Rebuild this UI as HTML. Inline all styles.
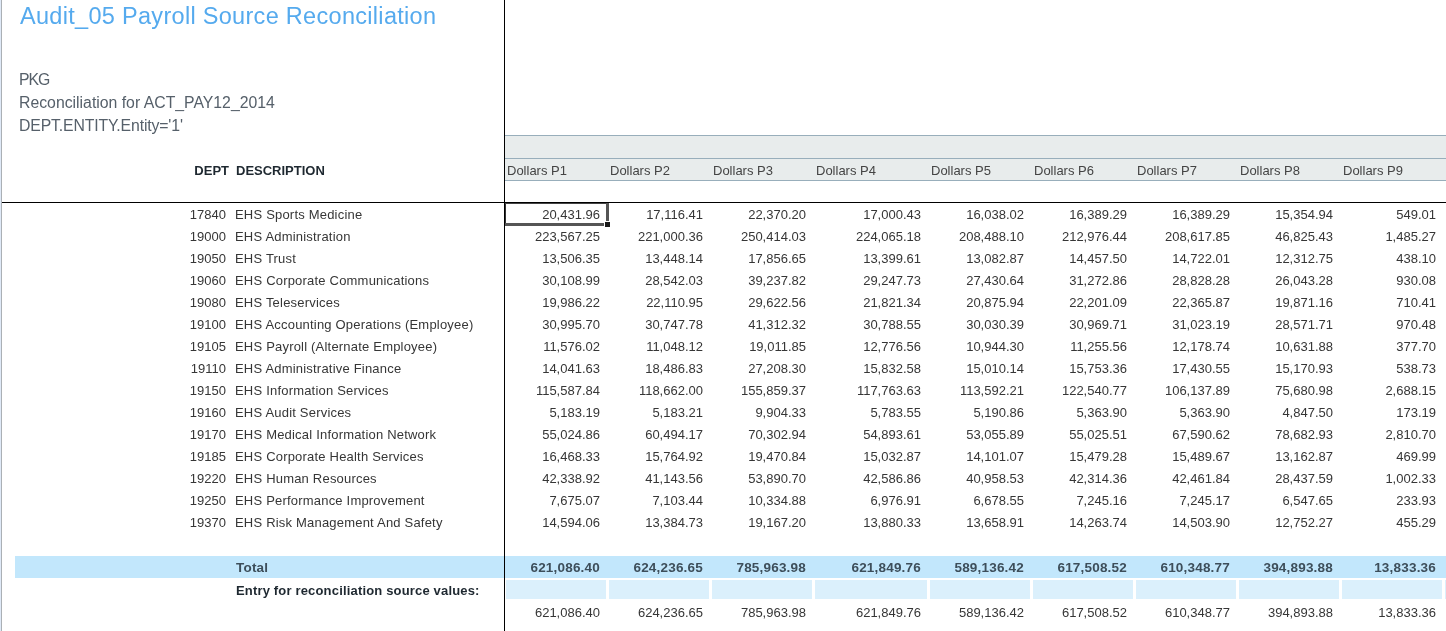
<!DOCTYPE html><html><head><meta charset="utf-8"><style>
*{margin:0;padding:0;box-sizing:border-box}
html,body{-webkit-font-smoothing:antialiased;width:1446px;height:631px;overflow:hidden;background:#fff}
body{position:relative;will-change:transform;font-family:"Liberation Sans",sans-serif;font-size:13px;color:#363636}
.a{position:absolute;white-space:nowrap}
.r{text-align:right}
.t{line-height:16px}

</style></head><body>
<div class="a" style="left:0;top:0;width:1px;height:631px;background:#dfe9f7"></div>
<div class="a" style="left:1px;top:0;width:1px;height:631px;background:#abb0b5"></div>
<div class="a" style="left:20px;top:1px;font-size:23.5px;letter-spacing:0.3px;color:#55aaee;line-height:30px">Audit_05 Payroll Source Reconciliation</div>
<div class="a" style="left:19px;top:70px;font-size:15.8px;letter-spacing:-1px;color:#56606a;line-height:20px">PKG</div>
<div class="a" style="left:19px;top:93px;font-size:15.8px;letter-spacing:0px;color:#56606a;line-height:20px">Reconciliation for ACT_PAY12_2014</div>
<div class="a" style="left:19px;top:116px;font-size:15.8px;letter-spacing:-0.14px;color:#56606a;line-height:20px">DEPT.ENTITY.Entity='1'</div>
<div class="a" style="left:505px;top:135px;width:941px;height:46px;background:#e8ecec;border-top:1px solid #98aebb;border-bottom:1px solid #98aebb"></div>
<div class="a" style="left:505px;top:158px;width:941px;height:1px;background:#98aebb"></div>
<div class="a t" style="left:507px;top:163px;color:#444">Dollars P1</div>
<div class="a t" style="left:610px;top:163px;color:#444">Dollars P2</div>
<div class="a t" style="left:713px;top:163px;color:#444">Dollars P3</div>
<div class="a t" style="left:816px;top:163px;color:#444">Dollars P4</div>
<div class="a t" style="left:931px;top:163px;color:#444">Dollars P5</div>
<div class="a t" style="left:1034px;top:163px;color:#444">Dollars P6</div>
<div class="a t" style="left:1137px;top:163px;color:#444">Dollars P7</div>
<div class="a t" style="left:1240px;top:163px;color:#444">Dollars P8</div>
<div class="a t" style="left:1343px;top:163px;color:#444">Dollars P9</div>
<div class="a t" style="left:0;top:163px;width:229px;text-align:right;font-weight:bold;color:#1e2830">DEPT</div>
<div class="a t" style="left:236px;top:163px;font-weight:bold;color:#1e2830">DESCRIPTION</div>
<div class="a" style="left:504px;top:0;width:1px;height:631px;background:#000"></div>
<div class="a" style="left:2px;top:202px;width:1444px;height:1px;background:#000"></div>
<div class="a t" style="left:0;top:207px;width:226px;text-align:right">17840</div>
<div class="a t" style="left:235px;top:207px;letter-spacing:0.2px">EHS Sports Medicine</div>
<div class="a t r" style="left:505px;top:207px;width:95px">20,431.96</div>
<div class="a t r" style="left:608px;top:207px;width:95px">17,116.41</div>
<div class="a t r" style="left:711px;top:207px;width:95px">22,370.20</div>
<div class="a t r" style="left:814px;top:207px;width:107px">17,000.43</div>
<div class="a t r" style="left:929px;top:207px;width:95px">16,038.02</div>
<div class="a t r" style="left:1032px;top:207px;width:95px">16,389.29</div>
<div class="a t r" style="left:1135px;top:207px;width:95px">16,389.29</div>
<div class="a t r" style="left:1238px;top:207px;width:95px">15,354.94</div>
<div class="a t r" style="left:1341px;top:207px;width:95px">549.01</div>
<div class="a t" style="left:0;top:229px;width:226px;text-align:right">19000</div>
<div class="a t" style="left:235px;top:229px;letter-spacing:0.2px">EHS Administration</div>
<div class="a t r" style="left:505px;top:229px;width:95px">223,567.25</div>
<div class="a t r" style="left:608px;top:229px;width:95px">221,000.36</div>
<div class="a t r" style="left:711px;top:229px;width:95px">250,414.03</div>
<div class="a t r" style="left:814px;top:229px;width:107px">224,065.18</div>
<div class="a t r" style="left:929px;top:229px;width:95px">208,488.10</div>
<div class="a t r" style="left:1032px;top:229px;width:95px">212,976.44</div>
<div class="a t r" style="left:1135px;top:229px;width:95px">208,617.85</div>
<div class="a t r" style="left:1238px;top:229px;width:95px">46,825.43</div>
<div class="a t r" style="left:1341px;top:229px;width:95px">1,485.27</div>
<div class="a t" style="left:0;top:251px;width:226px;text-align:right">19050</div>
<div class="a t" style="left:235px;top:251px;letter-spacing:0.2px">EHS Trust</div>
<div class="a t r" style="left:505px;top:251px;width:95px">13,506.35</div>
<div class="a t r" style="left:608px;top:251px;width:95px">13,448.14</div>
<div class="a t r" style="left:711px;top:251px;width:95px">17,856.65</div>
<div class="a t r" style="left:814px;top:251px;width:107px">13,399.61</div>
<div class="a t r" style="left:929px;top:251px;width:95px">13,082.87</div>
<div class="a t r" style="left:1032px;top:251px;width:95px">14,457.50</div>
<div class="a t r" style="left:1135px;top:251px;width:95px">14,722.01</div>
<div class="a t r" style="left:1238px;top:251px;width:95px">12,312.75</div>
<div class="a t r" style="left:1341px;top:251px;width:95px">438.10</div>
<div class="a t" style="left:0;top:273px;width:226px;text-align:right">19060</div>
<div class="a t" style="left:235px;top:273px;letter-spacing:0.2px">EHS Corporate Communications</div>
<div class="a t r" style="left:505px;top:273px;width:95px">30,108.99</div>
<div class="a t r" style="left:608px;top:273px;width:95px">28,542.03</div>
<div class="a t r" style="left:711px;top:273px;width:95px">39,237.82</div>
<div class="a t r" style="left:814px;top:273px;width:107px">29,247.73</div>
<div class="a t r" style="left:929px;top:273px;width:95px">27,430.64</div>
<div class="a t r" style="left:1032px;top:273px;width:95px">31,272.86</div>
<div class="a t r" style="left:1135px;top:273px;width:95px">28,828.28</div>
<div class="a t r" style="left:1238px;top:273px;width:95px">26,043.28</div>
<div class="a t r" style="left:1341px;top:273px;width:95px">930.08</div>
<div class="a t" style="left:0;top:295px;width:226px;text-align:right">19080</div>
<div class="a t" style="left:235px;top:295px;letter-spacing:0.2px">EHS Teleservices</div>
<div class="a t r" style="left:505px;top:295px;width:95px">19,986.22</div>
<div class="a t r" style="left:608px;top:295px;width:95px">22,110.95</div>
<div class="a t r" style="left:711px;top:295px;width:95px">29,622.56</div>
<div class="a t r" style="left:814px;top:295px;width:107px">21,821.34</div>
<div class="a t r" style="left:929px;top:295px;width:95px">20,875.94</div>
<div class="a t r" style="left:1032px;top:295px;width:95px">22,201.09</div>
<div class="a t r" style="left:1135px;top:295px;width:95px">22,365.87</div>
<div class="a t r" style="left:1238px;top:295px;width:95px">19,871.16</div>
<div class="a t r" style="left:1341px;top:295px;width:95px">710.41</div>
<div class="a t" style="left:0;top:317px;width:226px;text-align:right">19100</div>
<div class="a t" style="left:235px;top:317px;letter-spacing:0.2px">EHS Accounting Operations (Employee)</div>
<div class="a t r" style="left:505px;top:317px;width:95px">30,995.70</div>
<div class="a t r" style="left:608px;top:317px;width:95px">30,747.78</div>
<div class="a t r" style="left:711px;top:317px;width:95px">41,312.32</div>
<div class="a t r" style="left:814px;top:317px;width:107px">30,788.55</div>
<div class="a t r" style="left:929px;top:317px;width:95px">30,030.39</div>
<div class="a t r" style="left:1032px;top:317px;width:95px">30,969.71</div>
<div class="a t r" style="left:1135px;top:317px;width:95px">31,023.19</div>
<div class="a t r" style="left:1238px;top:317px;width:95px">28,571.71</div>
<div class="a t r" style="left:1341px;top:317px;width:95px">970.48</div>
<div class="a t" style="left:0;top:339px;width:226px;text-align:right">19105</div>
<div class="a t" style="left:235px;top:339px;letter-spacing:0.2px">EHS Payroll (Alternate Employee)</div>
<div class="a t r" style="left:505px;top:339px;width:95px">11,576.02</div>
<div class="a t r" style="left:608px;top:339px;width:95px">11,048.12</div>
<div class="a t r" style="left:711px;top:339px;width:95px">19,011.85</div>
<div class="a t r" style="left:814px;top:339px;width:107px">12,776.56</div>
<div class="a t r" style="left:929px;top:339px;width:95px">10,944.30</div>
<div class="a t r" style="left:1032px;top:339px;width:95px">11,255.56</div>
<div class="a t r" style="left:1135px;top:339px;width:95px">12,178.74</div>
<div class="a t r" style="left:1238px;top:339px;width:95px">10,631.88</div>
<div class="a t r" style="left:1341px;top:339px;width:95px">377.70</div>
<div class="a t" style="left:0;top:361px;width:226px;text-align:right">19110</div>
<div class="a t" style="left:235px;top:361px;letter-spacing:0.2px">EHS Administrative Finance</div>
<div class="a t r" style="left:505px;top:361px;width:95px">14,041.63</div>
<div class="a t r" style="left:608px;top:361px;width:95px">18,486.83</div>
<div class="a t r" style="left:711px;top:361px;width:95px">27,208.30</div>
<div class="a t r" style="left:814px;top:361px;width:107px">15,832.58</div>
<div class="a t r" style="left:929px;top:361px;width:95px">15,010.14</div>
<div class="a t r" style="left:1032px;top:361px;width:95px">15,753.36</div>
<div class="a t r" style="left:1135px;top:361px;width:95px">17,430.55</div>
<div class="a t r" style="left:1238px;top:361px;width:95px">15,170.93</div>
<div class="a t r" style="left:1341px;top:361px;width:95px">538.73</div>
<div class="a t" style="left:0;top:383px;width:226px;text-align:right">19150</div>
<div class="a t" style="left:235px;top:383px;letter-spacing:0.2px">EHS Information Services</div>
<div class="a t r" style="left:505px;top:383px;width:95px">115,587.84</div>
<div class="a t r" style="left:608px;top:383px;width:95px">118,662.00</div>
<div class="a t r" style="left:711px;top:383px;width:95px">155,859.37</div>
<div class="a t r" style="left:814px;top:383px;width:107px">117,763.63</div>
<div class="a t r" style="left:929px;top:383px;width:95px">113,592.21</div>
<div class="a t r" style="left:1032px;top:383px;width:95px">122,540.77</div>
<div class="a t r" style="left:1135px;top:383px;width:95px">106,137.89</div>
<div class="a t r" style="left:1238px;top:383px;width:95px">75,680.98</div>
<div class="a t r" style="left:1341px;top:383px;width:95px">2,688.15</div>
<div class="a t" style="left:0;top:405px;width:226px;text-align:right">19160</div>
<div class="a t" style="left:235px;top:405px;letter-spacing:0.2px">EHS Audit Services</div>
<div class="a t r" style="left:505px;top:405px;width:95px">5,183.19</div>
<div class="a t r" style="left:608px;top:405px;width:95px">5,183.21</div>
<div class="a t r" style="left:711px;top:405px;width:95px">9,904.33</div>
<div class="a t r" style="left:814px;top:405px;width:107px">5,783.55</div>
<div class="a t r" style="left:929px;top:405px;width:95px">5,190.86</div>
<div class="a t r" style="left:1032px;top:405px;width:95px">5,363.90</div>
<div class="a t r" style="left:1135px;top:405px;width:95px">5,363.90</div>
<div class="a t r" style="left:1238px;top:405px;width:95px">4,847.50</div>
<div class="a t r" style="left:1341px;top:405px;width:95px">173.19</div>
<div class="a t" style="left:0;top:427px;width:226px;text-align:right">19170</div>
<div class="a t" style="left:235px;top:427px;letter-spacing:0.2px">EHS Medical Information Network</div>
<div class="a t r" style="left:505px;top:427px;width:95px">55,024.86</div>
<div class="a t r" style="left:608px;top:427px;width:95px">60,494.17</div>
<div class="a t r" style="left:711px;top:427px;width:95px">70,302.94</div>
<div class="a t r" style="left:814px;top:427px;width:107px">54,893.61</div>
<div class="a t r" style="left:929px;top:427px;width:95px">53,055.89</div>
<div class="a t r" style="left:1032px;top:427px;width:95px">55,025.51</div>
<div class="a t r" style="left:1135px;top:427px;width:95px">67,590.62</div>
<div class="a t r" style="left:1238px;top:427px;width:95px">78,682.93</div>
<div class="a t r" style="left:1341px;top:427px;width:95px">2,810.70</div>
<div class="a t" style="left:0;top:449px;width:226px;text-align:right">19185</div>
<div class="a t" style="left:235px;top:449px;letter-spacing:0.2px">EHS Corporate Health Services</div>
<div class="a t r" style="left:505px;top:449px;width:95px">16,468.33</div>
<div class="a t r" style="left:608px;top:449px;width:95px">15,764.92</div>
<div class="a t r" style="left:711px;top:449px;width:95px">19,470.84</div>
<div class="a t r" style="left:814px;top:449px;width:107px">15,032.87</div>
<div class="a t r" style="left:929px;top:449px;width:95px">14,101.07</div>
<div class="a t r" style="left:1032px;top:449px;width:95px">15,479.28</div>
<div class="a t r" style="left:1135px;top:449px;width:95px">15,489.67</div>
<div class="a t r" style="left:1238px;top:449px;width:95px">13,162.87</div>
<div class="a t r" style="left:1341px;top:449px;width:95px">469.99</div>
<div class="a t" style="left:0;top:471px;width:226px;text-align:right">19220</div>
<div class="a t" style="left:235px;top:471px;letter-spacing:0.2px">EHS Human Resources</div>
<div class="a t r" style="left:505px;top:471px;width:95px">42,338.92</div>
<div class="a t r" style="left:608px;top:471px;width:95px">41,143.56</div>
<div class="a t r" style="left:711px;top:471px;width:95px">53,890.70</div>
<div class="a t r" style="left:814px;top:471px;width:107px">42,586.86</div>
<div class="a t r" style="left:929px;top:471px;width:95px">40,958.53</div>
<div class="a t r" style="left:1032px;top:471px;width:95px">42,314.36</div>
<div class="a t r" style="left:1135px;top:471px;width:95px">42,461.84</div>
<div class="a t r" style="left:1238px;top:471px;width:95px">28,437.59</div>
<div class="a t r" style="left:1341px;top:471px;width:95px">1,002.33</div>
<div class="a t" style="left:0;top:493px;width:226px;text-align:right">19250</div>
<div class="a t" style="left:235px;top:493px;letter-spacing:0.2px">EHS Performance Improvement</div>
<div class="a t r" style="left:505px;top:493px;width:95px">7,675.07</div>
<div class="a t r" style="left:608px;top:493px;width:95px">7,103.44</div>
<div class="a t r" style="left:711px;top:493px;width:95px">10,334.88</div>
<div class="a t r" style="left:814px;top:493px;width:107px">6,976.91</div>
<div class="a t r" style="left:929px;top:493px;width:95px">6,678.55</div>
<div class="a t r" style="left:1032px;top:493px;width:95px">7,245.16</div>
<div class="a t r" style="left:1135px;top:493px;width:95px">7,245.17</div>
<div class="a t r" style="left:1238px;top:493px;width:95px">6,547.65</div>
<div class="a t r" style="left:1341px;top:493px;width:95px">233.93</div>
<div class="a t" style="left:0;top:515px;width:226px;text-align:right">19370</div>
<div class="a t" style="left:235px;top:515px;letter-spacing:0.2px">EHS Risk Management And Safety</div>
<div class="a t r" style="left:505px;top:515px;width:95px">14,594.06</div>
<div class="a t r" style="left:608px;top:515px;width:95px">13,384.73</div>
<div class="a t r" style="left:711px;top:515px;width:95px">19,167.20</div>
<div class="a t r" style="left:814px;top:515px;width:107px">13,880.33</div>
<div class="a t r" style="left:929px;top:515px;width:95px">13,658.91</div>
<div class="a t r" style="left:1032px;top:515px;width:95px">14,263.74</div>
<div class="a t r" style="left:1135px;top:515px;width:95px">14,503.90</div>
<div class="a t r" style="left:1238px;top:515px;width:95px">12,752.27</div>
<div class="a t r" style="left:1341px;top:515px;width:95px">455.29</div>
<div class="a" style="left:505px;top:203px;width:1px;height:23px;background:#333"></div>
<div class="a" style="left:505px;top:203px;width:104px;height:1px;background:#444"></div>
<div class="a" style="left:606px;top:203px;width:3px;height:18px;background:#555"></div>
<div class="a" style="left:505px;top:223px;width:99px;height:3px;background:#555"></div>
<div class="a" style="left:605px;top:222px;width:5px;height:5px;background:#1a1a1a"></div>
<div class="a" style="left:15px;top:556px;width:1431px;height:22px;background:#c2e7fc"></div>
<div class="a" style="left:504px;top:556px;width:1px;height:75px;background:#000"></div>
<div class="a t" style="left:236px;top:560px;font-weight:bold;font-size:13.5px;letter-spacing:0.2px;color:#3d4e5a">Total</div>
<div class="a t r" style="left:505px;top:560px;width:95px;font-weight:bold;font-size:13.5px;letter-spacing:0.2px;color:#3d4e5a">621,086.40</div>
<div class="a t r" style="left:608px;top:560px;width:95px;font-weight:bold;font-size:13.5px;letter-spacing:0.2px;color:#3d4e5a">624,236.65</div>
<div class="a t r" style="left:711px;top:560px;width:95px;font-weight:bold;font-size:13.5px;letter-spacing:0.2px;color:#3d4e5a">785,963.98</div>
<div class="a t r" style="left:814px;top:560px;width:107px;font-weight:bold;font-size:13.5px;letter-spacing:0.2px;color:#3d4e5a">621,849.76</div>
<div class="a t r" style="left:929px;top:560px;width:95px;font-weight:bold;font-size:13.5px;letter-spacing:0.2px;color:#3d4e5a">589,136.42</div>
<div class="a t r" style="left:1032px;top:560px;width:95px;font-weight:bold;font-size:13.5px;letter-spacing:0.2px;color:#3d4e5a">617,508.52</div>
<div class="a t r" style="left:1135px;top:560px;width:95px;font-weight:bold;font-size:13.5px;letter-spacing:0.2px;color:#3d4e5a">610,348.77</div>
<div class="a t r" style="left:1238px;top:560px;width:95px;font-weight:bold;font-size:13.5px;letter-spacing:0.2px;color:#3d4e5a">394,893.88</div>
<div class="a t r" style="left:1341px;top:560px;width:95px;font-weight:bold;font-size:13.5px;letter-spacing:0.2px;color:#3d4e5a">13,833.36</div>
<div class="a t" style="left:236px;top:583px;letter-spacing:0.17px;font-weight:bold;color:#1e2830">Entry for reconciliation source values:</div>
<div class="a" style="left:506px;top:580px;width:100px;height:19px;background:#dbf0fc"></div>
<div class="a" style="left:609px;top:580px;width:100px;height:19px;background:#dbf0fc"></div>
<div class="a" style="left:712px;top:580px;width:100px;height:19px;background:#dbf0fc"></div>
<div class="a" style="left:815px;top:580px;width:112px;height:19px;background:#dbf0fc"></div>
<div class="a" style="left:930px;top:580px;width:100px;height:19px;background:#dbf0fc"></div>
<div class="a" style="left:1033px;top:580px;width:100px;height:19px;background:#dbf0fc"></div>
<div class="a" style="left:1136px;top:580px;width:100px;height:19px;background:#dbf0fc"></div>
<div class="a" style="left:1239px;top:580px;width:100px;height:19px;background:#dbf0fc"></div>
<div class="a" style="left:1342px;top:580px;width:100px;height:19px;background:#dbf0fc"></div>
<div class="a" style="left:1445px;top:580px;width:100px;height:19px;background:#dbf0fc"></div>
<div class="a t r" style="left:505px;top:605px;width:95px">621,086.40</div>
<div class="a t r" style="left:608px;top:605px;width:95px">624,236.65</div>
<div class="a t r" style="left:711px;top:605px;width:95px">785,963.98</div>
<div class="a t r" style="left:814px;top:605px;width:107px">621,849.76</div>
<div class="a t r" style="left:929px;top:605px;width:95px">589,136.42</div>
<div class="a t r" style="left:1032px;top:605px;width:95px">617,508.52</div>
<div class="a t r" style="left:1135px;top:605px;width:95px">610,348.77</div>
<div class="a t r" style="left:1238px;top:605px;width:95px">394,893.88</div>
<div class="a t r" style="left:1341px;top:605px;width:95px">13,833.36</div>
</body></html>
